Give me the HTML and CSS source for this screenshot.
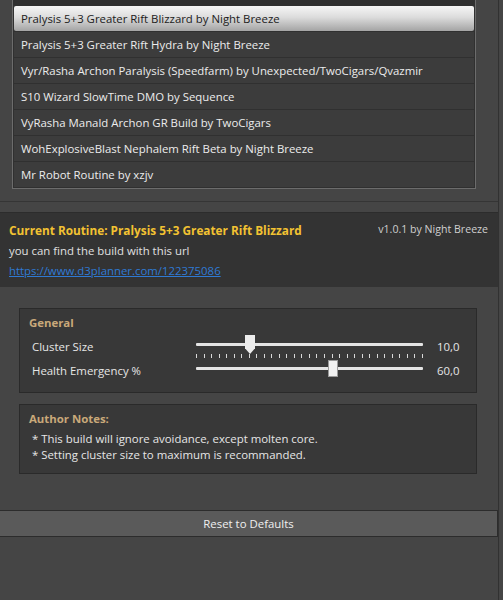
FILE: index.html
```html
<!DOCTYPE html>
<html lang="en">
<head>
    <meta charset="UTF-8">
    <title>Routine Settings</title>
    <link rel="stylesheet" href="styles.css">
</head>
<body>
    <div id="panel">
        <!-- Routine list -->
        <div id="list-area">
            <ul id="routine-list">
                <li class="routine selected">Pralysis 5+3 Greater Rift Blizzard by Night Breeze</li>
                <li class="routine">Pralysis 5+3 Greater Rift Hydra by Night Breeze</li>
                <li class="routine">Vyr/Rasha Archon Paralysis (Speedfarm) by Unexpected/TwoCigars/Qvazmir</li>
                <li class="routine">S10 Wizard SlowTime DMO by Sequence</li>
                <li class="routine">VyRasha Manald Archon GR Build by TwoCigars</li>
                <li class="routine">WohExplosiveBlast Nephalem Rift Beta by Night Breeze</li>
                <li class="routine">Mr Robot Routine by xzjv</li>
            </ul>
        </div>

        <!-- Current routine info -->
        <div id="info">
            <div class="info-top">
                <span class="current">Current Routine: Pralysis 5+3 Greater Rift Blizzard</span>
                <span class="version">v1.0.1 by Night Breeze</span>
            </div>
            <div class="info-line">you can find the build with this url</div>
            <a class="info-link" href="#">https://www.d3planner.com/122375086</a>
        </div>

        <!-- Settings -->
        <div class="group">
            <div class="group-title">General</div>
            <div class="setting">
                <span class="label">Cluster Size</span>
                <div class="slider">
                    <div class="track"></div>
                    <div class="ticks"></div>
                    <div class="thumb pointer" style="left: 49px"></div>
                </div>
                <span class="value">10,0</span>
            </div>
            <div class="setting">
                <span class="label">Health Emergency %</span>
                <div class="slider">
                    <div class="track"></div>
                    <div class="thumb" style="left: 132px"></div>
                </div>
                <span class="value">60,0</span>
            </div>
        </div>

        <div class="group notes">
            <div class="group-title">Author Notes:</div>
            <div class="note">* This build will ignore avoidance, except molten core.</div>
            <div class="note">* Setting cluster size to maximum is recommanded.</div>
        </div>

        <button id="reset">Reset to Defaults</button>
    </div>
</body>
</html>
```

FILE: styles.css
```css
body {
    background: #454545;
    font-family: 'Open Sans', 'Noto Sans', sans-serif;
    font-size: 11.4px;
    color: #e6e6e6;
    margin: 0;
    padding: 0;
}

#panel {
    width: 498px;
    height: 600px;
    border-right: 1px solid #313131;
}

#list-area {
    padding: 0 22px 12px 12px;
    border-bottom: 1px solid #353535;
}

#routine-list {
    list-style: none;
    margin: 0;
    padding: 6px 1px 1px 1px;
    background: #303030;
    border: 1px solid #6c6c6c;
    border-top: none;
}

.routine {
    height: 25px;
    line-height: 25px;
    margin-bottom: 1px;
    padding-left: 7px;
    background: #3c3c3c;
    color: #ececec;
    white-space: nowrap;
    overflow: hidden;
}

.routine:last-child {
    margin-bottom: 0;
}

.routine.selected {
    background: linear-gradient(#f6f6f6, #dcdcdc 45%, #a4a4a4);
    color: #202020;
    border-radius: 2px;
}

#info {
    margin-top: 10px;
    background: #333333;
    border-top: 1px solid #2c2c2c;
    padding: 6px 10px 6px 9px;
    height: 62px;
}

.info-top {
    display: flex;
    justify-content: space-between;
    align-items: flex-start;
    height: 22px;
}

.current {
    font-weight: bold;
    font-size: 11.8px;
    color: #f2c232;
    line-height: 22px;
}

.version {
    font-size: 10.6px;
    color: #cfcfcf;
    line-height: 20px;
}

.info-line {
    line-height: 20px;
    color: #e0e0e0;
}

.info-link {
    display: inline-block;
    line-height: 20px;
    color: #2f7ad4;
}

.group {
    margin: 21px 21px 0 19px;
    background: #383838;
    border: 1px solid #2a2a2a;
    padding: 5px 10px 10px 9px;
}

.group-title {
    font-weight: bold;
    color: #c9a97a;
    line-height: 18px;
    margin-bottom: 2px;
}

.setting {
    display: grid;
    grid-template-columns: 164px 227px 1fr;
    align-items: center;
    height: 24px;
    padding-left: 3px;
}

.value {
    padding-left: 14px;
}

.slider {
    position: relative;
    height: 24px;
}

.track {
    position: absolute;
    left: 0;
    right: 0;
    top: 9px;
    height: 3px;
    background: #e4e4e4;
    border-radius: 1px;
}

.ticks {
    position: absolute;
    left: 0;
    right: 0;
    top: 20px;
    height: 4px;
    background: repeating-linear-gradient(to right, #d8d8d8 0, #d8d8d8 1px, transparent 1px, transparent 7.53px);
}

.thumb {
    position: absolute;
    top: 2px;
    width: 10px;
    height: 17px;
    background: #f0f0f0;
    border: 1px solid #9a9a9a;
    box-sizing: border-box;
}

.thumb.pointer {
    top: 1px;
    height: 19px;
    border: none;
    background: #ececec;
    clip-path: polygon(0 0, 100% 0, 100% 70%, 50% 100%, 0 70%);
}

.notes {
    margin-top: 11px;
    padding-bottom: 10px;
}

.note {
    line-height: 16px;
    padding-left: 3px;
}

.notes .group-title {
    margin-bottom: 3px;
}

#reset {
    display: block;
    width: 498px;
    height: 27px;
    margin-top: 36px;
    background: #5a5a5a;
    border: 1px solid #2c2c2c;
    border-left: none;
    color: #f0f0f0;
    font-family: 'Open Sans', 'Noto Sans', sans-serif;
    font-size: 11.4px;
}
```
